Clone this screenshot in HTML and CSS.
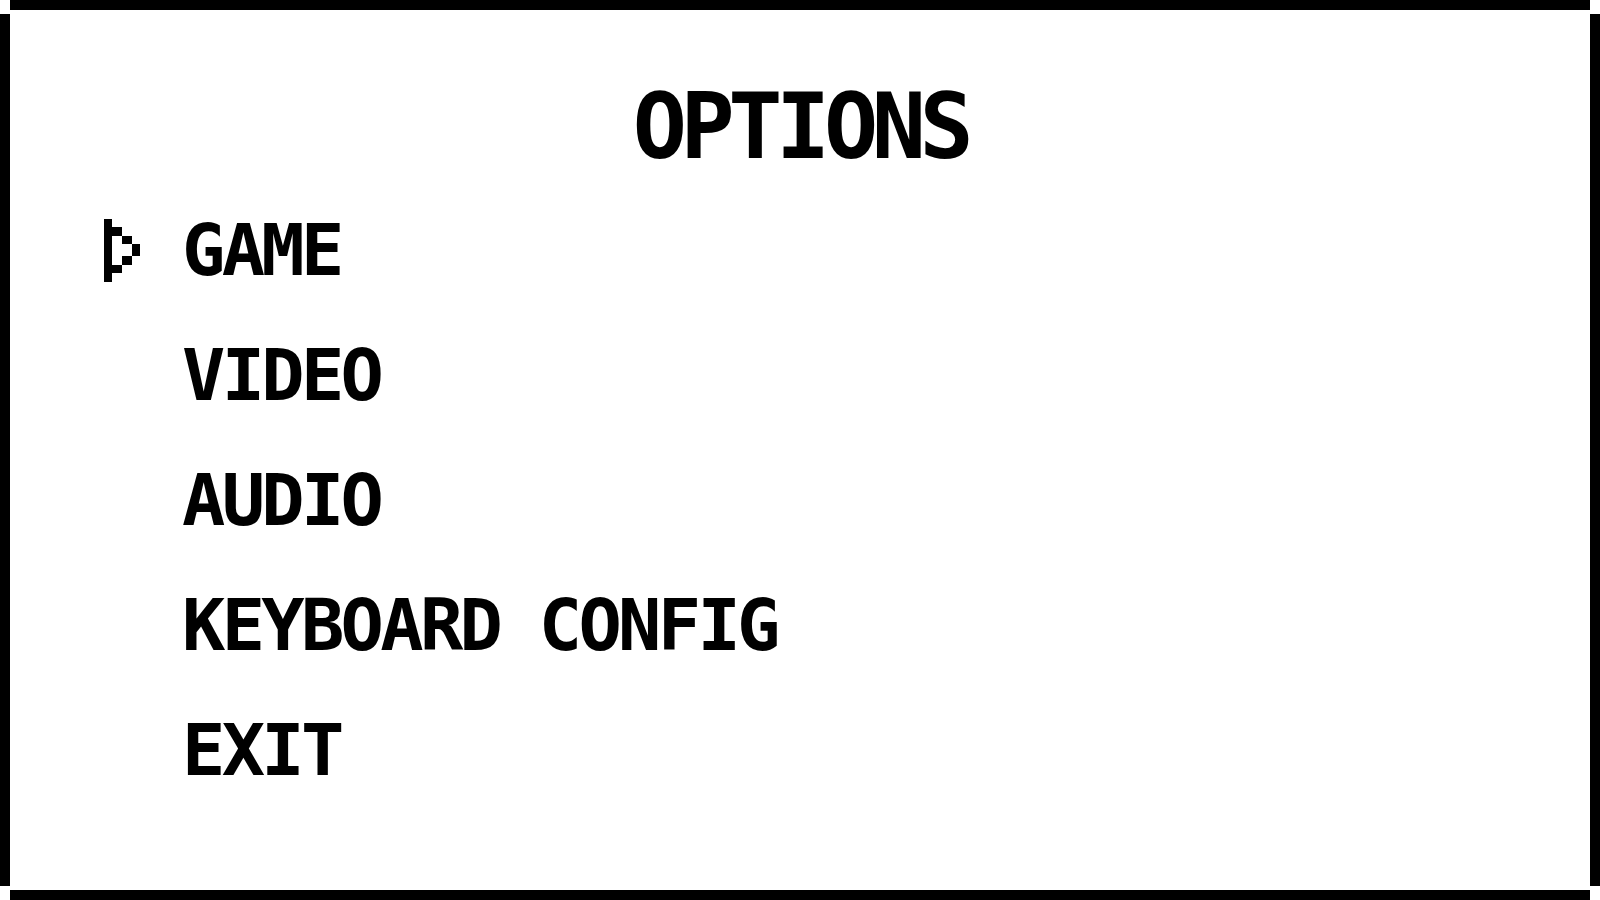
FILE: index.html
```html
<!DOCTYPE html>
<html lang="en">
<head>
  <meta charset="UTF-8">
  <meta name="viewport" content="width=device-width, initial-scale=1.0">
  <title>Options</title>
  <link rel="stylesheet" href="styles.css">
</head>
<body>
  <div class="frame">
    <div class="edge edge-top"></div>
    <div class="edge edge-left"></div>
    <main class="screen">
      <h1 class="title">OPTIONS</h1>
      <ul class="menu">
        <li class="menu-item selected">
          <span class="cursor">
            <svg width="36" height="63" viewBox="0 0 36 63">
              <path d="M0 0H8V8H18V17H28V25H36V37H28V46H18V54H8V63H0Z M8 17V46H18V37H28V25H18V17Z" fill="#000" fill-rule="evenodd"/>
            </svg>
          </span>
          <span class="label">GAME</span>
        </li>
        <li class="menu-item"><span class="cursor"></span><span class="label">VIDEO</span></li>
        <li class="menu-item"><span class="cursor"></span><span class="label">AUDIO</span></li>
        <li class="menu-item"><span class="cursor"></span><span class="label">KEYBOARD CONFIG</span></li>
        <li class="menu-item"><span class="cursor"></span><span class="label">EXIT</span></li>
      </ul>
    </main>
    <div class="edge edge-right"></div>
    <div class="edge edge-bottom"></div>
  </div>
</body>
</html>
```

FILE: styles.css
```css
html, body {
  margin: 0;
  padding: 0;
  background: #fff;
}

body {
  font-family: "DejaVu Sans Mono", "Liberation Mono", monospace;
  font-weight: bold;
  color: #000;
}

/* outer frame: four separate bars, corners left open */
.frame {
  width: 1600px;
  height: 900px;
  display: grid;
  grid-template-columns: 10px 1fr 10px;
  grid-template-rows: 10px 1fr 10px;
}

.edge {
  background: #000;
}

.edge-top {
  grid-column: 2;
  grid-row: 1;
}

.edge-bottom {
  grid-column: 2;
  grid-row: 3;
}

.edge-left {
  grid-column: 1;
  grid-row: 1 / 4;
  margin: 14px 0;
}

.edge-right {
  grid-column: 3;
  grid-row: 1 / 4;
  margin: 14px 0;
}

.screen {
  grid-column: 2;
  grid-row: 2;
  display: flex;
  flex-direction: column;
}

.title {
  margin: 67px 0 0 0;
  text-align: center;
  font-size: 90px;
  line-height: 100px;
  letter-spacing: -6.4px;
  font-weight: bold;
}

.menu {
  list-style: none;
  margin: 11px 0 0 0;
  padding: 0 0 0 94px;
}

.menu-item {
  display: flex;
  align-items: center;
  height: 125px;
}

.cursor {
  width: 78px;
  display: flex;
  align-items: center;
}

.cursor svg {
  display: block;
}

.label {
  font-size: 72px;
  line-height: 125px;
  letter-spacing: -3.7px;
  white-space: pre;
}
```
